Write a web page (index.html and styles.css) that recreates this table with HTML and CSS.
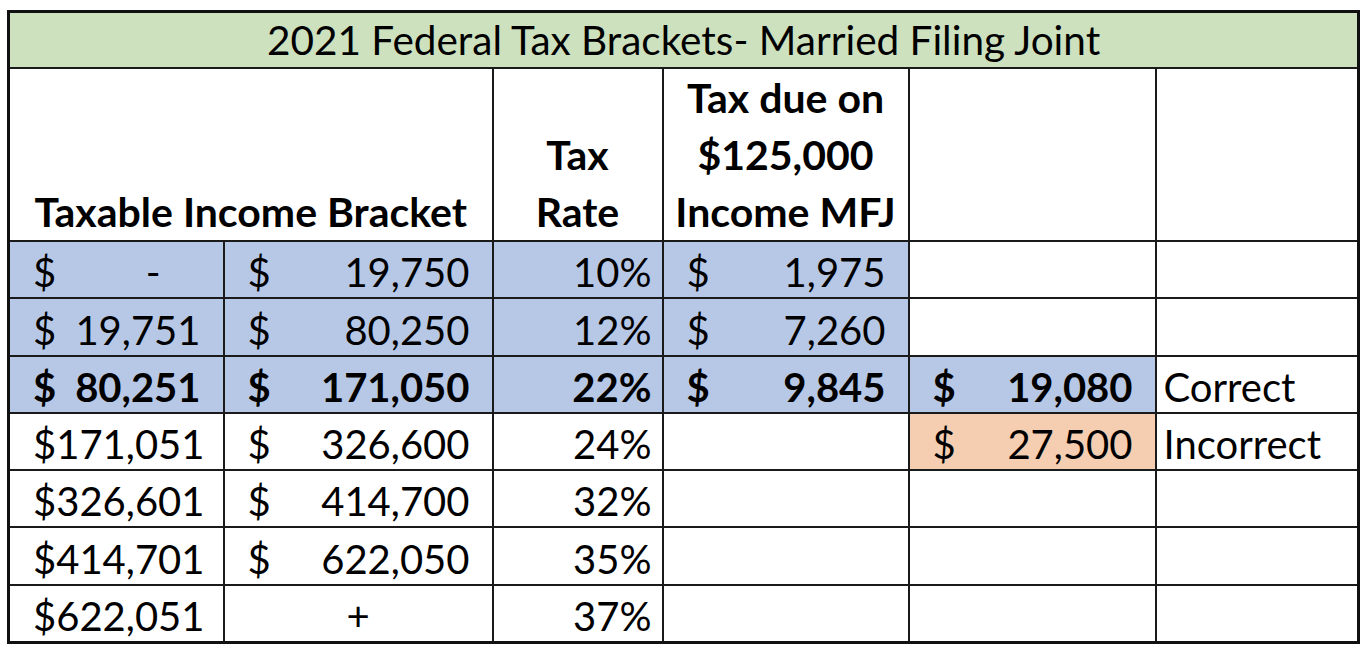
FILE: index.html
```html
<!DOCTYPE html>
<html lang="en">
<head>
<meta charset="utf-8">
<title>2021 Federal Tax Brackets- Married Filing Joint</title>
<link rel="stylesheet" href="styles.css">
</head>
<body>
<table class="sheet">
  <colgroup>
    <col class="c-a"><col class="c-b"><col class="c-c"><col class="c-d"><col class="c-e"><col class="c-f">
  </colgroup>
  <tr class="title-row">
    <td colspan="6" class="title">2021 Federal Tax Brackets- Married Filing Joint</td>
  </tr>
  <tr class="head-row">
    <th colspan="2" class="head">Taxable Income Bracket</th>
    <th class="head">Tax<br>Rate</th>
    <th class="head">Tax due on<br>$125,000<br>Income MFJ</th>
    <th class="head"></th>
    <th class="head"></th>
  </tr>
  <tr class="row">
    <td class="blue acc"><div class="ac"><span>$</span><span class="zero">-</span></div></td>
    <td class="blue acc"><div class="ac"><span>$</span><span>19,750</span></div></td>
    <td class="blue pct">10%</td>
    <td class="blue acc"><div class="ac"><span>$</span><span>1,975</span></div></td>
    <td></td>
    <td></td>
  </tr>
  <tr class="row">
    <td class="blue acc"><div class="ac"><span>$</span><span>19,751</span></div></td>
    <td class="blue acc"><div class="ac"><span>$</span><span>80,250</span></div></td>
    <td class="blue pct">12%</td>
    <td class="blue acc"><div class="ac"><span>$</span><span>7,260</span></div></td>
    <td></td>
    <td></td>
  </tr>
  <tr class="row bold">
    <td class="blue acc"><div class="ac"><span>$</span><span>80,251</span></div></td>
    <td class="blue acc"><div class="ac"><span>$</span><span>171,050</span></div></td>
    <td class="blue pct">22%</td>
    <td class="blue acc"><div class="ac"><span>$</span><span>9,845</span></div></td>
    <td class="blue acc"><div class="ac"><span>$</span><span>19,080</span></div></td>
    <td class="label">Correct</td>
  </tr>
  <tr class="row">
    <td class="acc"><div class="ac"><span>$</span><span>171,051</span></div></td>
    <td class="acc"><div class="ac"><span>$</span><span>326,600</span></div></td>
    <td class="pct">24%</td>
    <td></td>
    <td class="orange acc"><div class="ac"><span>$</span><span>27,500</span></div></td>
    <td class="label">Incorrect</td>
  </tr>
  <tr class="row">
    <td class="acc"><div class="ac"><span>$</span><span>326,601</span></div></td>
    <td class="acc"><div class="ac"><span>$</span><span>414,700</span></div></td>
    <td class="pct">32%</td>
    <td></td>
    <td></td>
    <td></td>
  </tr>
  <tr class="row">
    <td class="acc"><div class="ac"><span>$</span><span>414,701</span></div></td>
    <td class="acc"><div class="ac"><span>$</span><span>622,050</span></div></td>
    <td class="pct">35%</td>
    <td></td>
    <td></td>
    <td></td>
  </tr>
  <tr class="row">
    <td class="acc"><div class="ac"><span>$</span><span>622,051</span></div></td>
    <td class="plus">+</td>
    <td class="pct">37%</td>
    <td></td>
    <td></td>
    <td></td>
  </tr>
</table>
</body>
</html>
```

FILE: styles.css
```css
html, body {
  margin: 0;
  padding: 0;
  background: #ffffff;
}

body {
  padding: 10px 0 0 7px;
  font-family: Lato, "Open Sans", "Liberation Sans", sans-serif;
  color: #000000;
}

.sheet {
  border-collapse: collapse;
  table-layout: fixed;
  width: 1350px;
  border: 3px solid #111111;
}

.c-a { width: 215px; }
.c-b { width: 269px; }
.c-c { width: 170px; }
.c-d { width: 246px; }
.c-e { width: 247px; }
.c-f { width: 203px; }

td, th {
  border: 2px solid #1a1a1a;
  padding: 0;
  font-size: 40px;
  line-height: 49px;
  vertical-align: bottom;
  white-space: nowrap;
  overflow: hidden;
}

.title-row td {
  height: 54px;
}

.title {
  background: #cde1bf;
  text-align: center;
  font-weight: 400;
  font-size: 40.5px;
  line-height: 54px;
  vertical-align: middle;
}

.head-row th {
  height: 171px;
  font-weight: 700;
  font-size: 41px;
  text-align: center;
  line-height: 57px;
}

.row td {
  height: 55.3px;
}

.bold td {
  font-weight: 700;
}

.bold td.label {
  font-weight: 400;
}

.acc {
  padding: 0 22px 0 23px;
}

.ac {
  display: flex;
  justify-content: space-between;
}

.zero {
  padding-right: 40px;
}

.pct {
  text-align: right;
  padding-right: 10px;
}

.plus {
  text-align: center;
}

.label {
  padding-left: 7px;
}

.blue {
  background: #b7c8e7;
}

.orange {
  background: #f5cdb0;
}
```
